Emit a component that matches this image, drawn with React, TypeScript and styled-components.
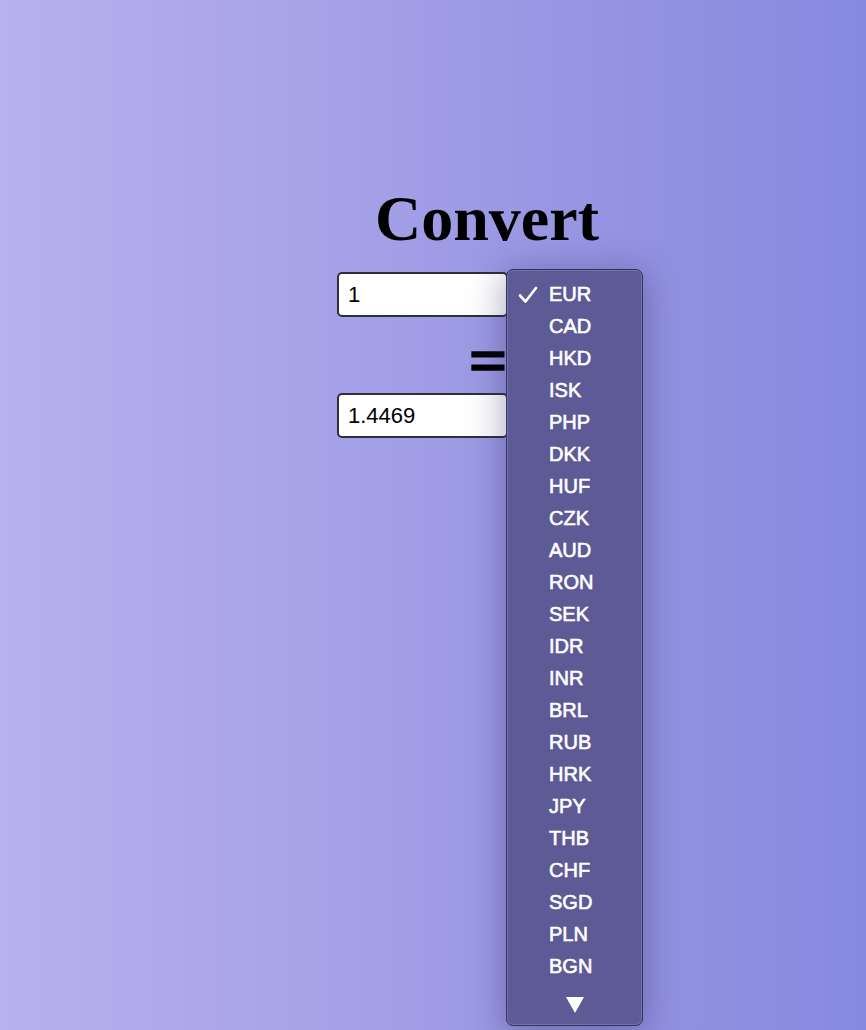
import styled, { createGlobalStyle } from 'styled-components';

const GlobalStyle = createGlobalStyle`
  html, body {
    margin: 0;
    padding: 0;
  }
  body {
    min-height: 1030px;
    background: linear-gradient(90deg, #b9b1ed 0%, #a5a1e8 40%, #9a98e3 60%, #8789e0 100%);
    font-family: 'Liberation Sans', Arial, sans-serif;
  }
`;

const Page = styled.div`
  display: flex;
  justify-content: center;
  padding: 176px 0 0 108px;
  min-height: 1030px;
  box-sizing: border-box;
`;

const Converter = styled.div`
  display: flex;
  flex-direction: column;
  align-items: center;
`;

const Title = styled.h1`
  margin: 0 0 10px;
  font-family: 'Liberation Serif', 'Times New Roman', serif;
  font-weight: bold;
  font-size: 64px;
  line-height: 86px;
  color: #000;
`;

const Row = styled.div`
  position: relative;
  display: flex;
  align-items: center;
  width: 300px;
`;

const Amount = styled.input`
  box-sizing: border-box;
  width: 171px;
  height: 45px;
  padding: 0 9px;
  border: 2px solid #2f2f3a;
  border-radius: 5px;
  background: #fff;
  font-family: 'Liberation Sans', Arial, sans-serif;
  font-size: 22px;
  color: #000;
  outline: none;
`;

const SelectBox = styled.div`
  box-sizing: border-box;
  width: 129px;
  height: 45px;
  border: 2px solid #2f2f3a;
  border-radius: 5px;
  background: #fff;
`;

const Equals = styled.div`
  font-family: 'Liberation Serif', 'Times New Roman', serif;
  font-weight: bold;
  font-size: 68px;
  line-height: 86px;
  height: 76px;
  margin-left: 2px;
  -webkit-text-stroke: 1.6px #000;
`;

const Dropdown = styled.ul`
  position: absolute;
  left: 169px;
  top: -3px;
  z-index: 10;
  box-sizing: border-box;
  width: 137px;
  height: 757px;
  margin: 0;
  padding: 8px 0 0;
  list-style: none;
  background: #5e5a95;
  border: 1px solid #34325e;
  border-radius: 7px;
  box-shadow: 0 0 0 1px rgba(160, 156, 220, 0.35) inset, 0 6px 34px 4px rgba(40, 36, 90, 0.35);
`;

const Option = styled.li`
  position: relative;
  height: 32px;
  line-height: 32px;
  padding-left: 42px;
  font-family: 'Liberation Sans', Arial, sans-serif;
  font-size: 20px;
  color: #fff;
  -webkit-text-stroke: 0.6px #fff;
`;

const Check = styled.span`
  position: absolute;
  left: 11px;
  top: 0;
  font-size: 22px;
`;

const MoreArrow = styled.div`
  display: flex;
  justify-content: center;
  padding: 14px 0 0;
  color: #fff;
  font-size: 18px;
`;

const currencies = [
  'EUR', 'CAD', 'HKD', 'ISK', 'PHP', 'DKK', 'HUF', 'CZK', 'AUD', 'RON', 'SEK',
  'IDR', 'INR', 'BRL', 'RUB', 'HRK', 'JPY', 'THB', 'CHF', 'SGD', 'PLN', 'BGN',
];

export default function App() {
  return (
    <>
      <GlobalStyle />
      <Page>
        <Converter>
          <Title>Convert</Title>
          <Row>
            <Amount defaultValue="1" />
            <SelectBox />
            <Dropdown>
              {currencies.map((c, i) => (
                <Option key={c}>
                  {i === 0 && (
                    <Check>
                      <svg width="20" height="18" viewBox="0 0 20 18" style={{ verticalAlign: 'middle' }}>
                        <path d="M2 9.5 L7.5 15.5 L18 2" fill="none" stroke="#fff" strokeWidth="2.6" strokeLinecap="round" strokeLinejoin="round" />
                      </svg>
                    </Check>
                  )}
                  {c}
                </Option>
              ))}
              <MoreArrow>
                <svg width="20" height="18" viewBox="0 0 20 18">
                  <path d="M1 1 L19 1 L10 17 Z" fill="#fff" />
                </svg>
              </MoreArrow>
            </Dropdown>
          </Row>
          <Equals>=</Equals>
          <Row>
            <Amount defaultValue="1.4469" />
            <SelectBox />
          </Row>
        </Converter>
      </Page>
    </>
  );
}
